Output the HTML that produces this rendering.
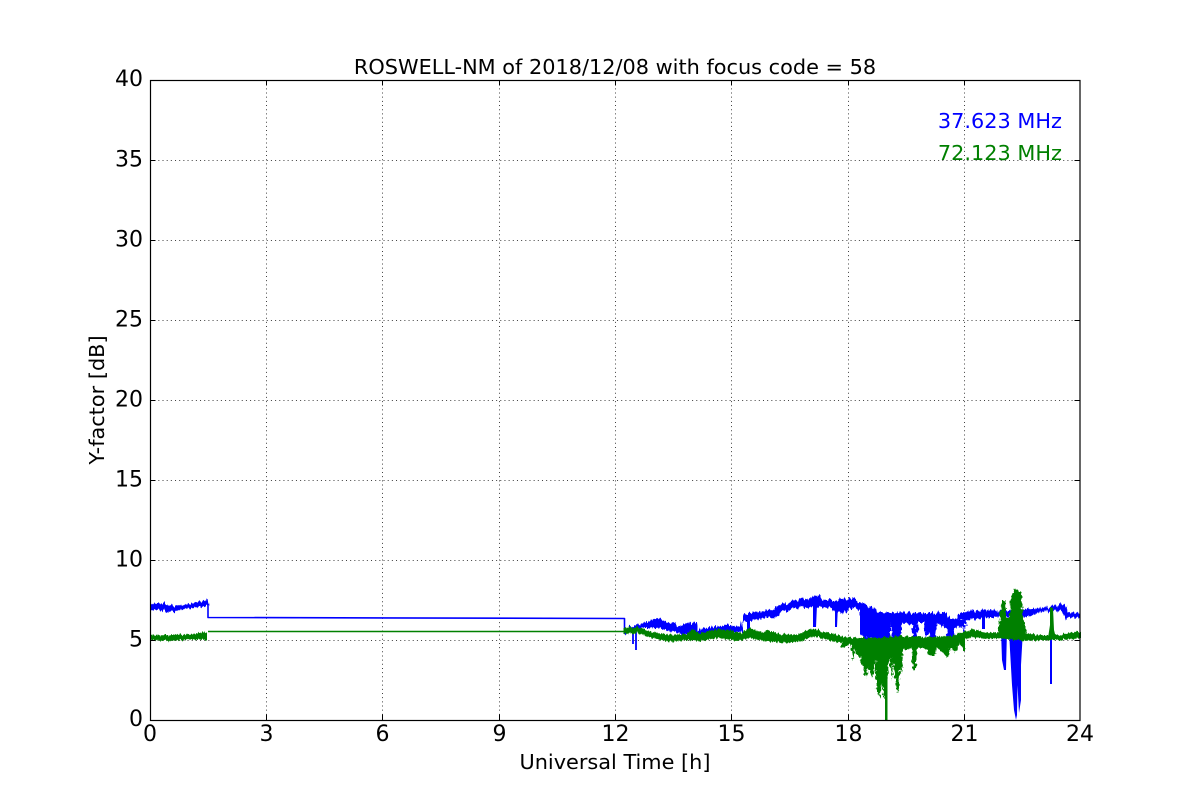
<!DOCTYPE html>
<html>
<head>
<meta charset="utf-8">
<style>
html,body{margin:0;padding:0;background:#fff;width:1200px;height:800px;overflow:hidden}
svg{display:block}
text{font-family:"DejaVu Sans",sans-serif;fill:#000}
.t{font-size:22px}
.l{font-size:20.83px}
</style>
</head>
<body>
<svg width="1200" height="800" viewBox="0 0 1200 800" xmlns="http://www.w3.org/2000/svg">
<defs>
<filter id="n1" filterUnits="userSpaceOnUse" x="0" y="0" width="1200" height="800" color-interpolation-filters="sRGB">
<feTurbulence type="fractalNoise" baseFrequency="0.55 0.006" numOctaves="2" seed="4" result="t"/>
<feDisplacementMap in="SourceGraphic" in2="t" scale="7" xChannelSelector="A" yChannelSelector="R"/>
</filter>
<filter id="n2" filterUnits="userSpaceOnUse" x="0" y="0" width="1200" height="800" color-interpolation-filters="sRGB">
<feTurbulence type="fractalNoise" baseFrequency="0.6 0.006" numOctaves="2" seed="11" result="t"/>
<feDisplacementMap in="SourceGraphic" in2="t" scale="5" xChannelSelector="A" yChannelSelector="G"/>
</filter>
<filter id="n3" filterUnits="userSpaceOnUse" x="0" y="0" width="1200" height="800" color-interpolation-filters="sRGB">
<feTurbulence type="fractalNoise" baseFrequency="0.35 0.25" numOctaves="2" seed="7" result="t"/>
<feDisplacementMap in="SourceGraphic" in2="t" scale="6" xChannelSelector="R" yChannelSelector="G"/>
</filter>
</defs>
<rect width="1200" height="800" fill="#fff"/>
<!-- grid -->
<g stroke="#000" stroke-width="1" stroke-dasharray="1 3.17" stroke-opacity=".75" fill="none">
<path d="M266.5 80V720M382.5 80V720M499.5 80V720M615.5 80V720M731.5 80V720M848.5 80V720M964.5 80V720"/>
<path d="M150 160.5H1080M150 240.5H1080M150 320.5H1080M150 400.5H1080M150 480.5H1080M150 560.5H1080M150 640.5H1080"/>
</g>
<!-- blue thin -->
<g fill="none" stroke="#0000ff" stroke-linejoin="round">
<path stroke-width="1.6" d="M208 604V617.5L624.5 618.5V634"/>
<path stroke-width="1.8" d="M633 630V644M636 630V650"/>
</g>
<!-- blue noisy -->
<g fill="#0000ff" filter="url(#n1)">
<path d="M150 604L165 603 172 606 185 605 195 603 207 599 208 605 195 608 185 609 172 612 160 610 150 610Z"/>
<path d="M625 628L637 625 647 622 657 618 667 622 675 623 678 627 690 623 697 622 698 630 710 627 730 625 740 627 743 615 753 612 773 610 780 605 797 600 810 598 817 595 823 600 837 600 853 598 860 603 875 608 877 613 890 618 898 612 910 613 923 613 947 613 952 625 957 615 968 611 993 609 998 612 1027 609 1050 607 1060 604 1067 605 1068 613 1080 612 1080 617 1067 618 1060 610 1040 612 1027 617 1000 617 985 617 968 620 960 620 948 622 937 620 925 620 905 620 892 622 885 640 877 640 860 635 860 610 855 608 848 609 843 615 840 612 830 608 810 607 797 608 780 612 777 618 763 618 743 622 742 632 730 632 710 636 698 636 683 635 675 632 657 628 640 628 625 634Z"/>
</g>
<!-- blue detail -->
<g fill="#0000ff" filter="url(#n3)">
<path d="M860 618L863 640 867 640 868 625 873 640 875 625 877 642 883 646 890 643 891 622 893 642 900 640 902 622 912 625 913 643 917 643 918 622 923 622 926 638 929 632 931 644 935 642 937 622 947 630 948 640 952 642 955 628 964 627 964 640 966 620 860 610Z"/>
</g>
<g fill="#0000ff">
<path d="M813 605L813 627 816 627 817 605ZM835 605L835 627 837 627 838 605ZM747 615L747 631 750 631 750 615ZM982 612L982 629 985 629 985 612Z"/>
<path d="M1001 630L1002 660 1004 670 1006 670 1007 630ZM1009 630L1010 650 1012 685 1014 710 1016 720 1017 715 1017.5 685 1019 713 1021 700 1021 665 1023 630Z"/>
<path d="M1050 610H1052V684H1050Z"/>
</g>
<!-- green noisy -->
<g fill="#008000">
<path stroke="#008000" stroke-width="1.6" d="M208 631.5H625" />
</g>
<g fill="#008000" filter="url(#n2)">
<path d="M150 635L175 635 190 634 207 632 207 640 190 639 175 641 150 640Z"/>
<path d="M624 628L637 627 653 632 670 635 687 634 692 629 700 633 720 629 730 630 740 633 750 628 763 633 767 630 780 634 797 635 813 628 823 632 833 633 843 637 860 638 880 638 920 638 950 636 964 632 972 629 987 633 1000 632 1027 634 1043 635 1060 635 1077 631 1080 632 1080 638 1060 640 1043 640 1027 641 1000 638 987 639 970 637 960 642 940 645 900 645 870 645 849 644 837 642 813 636 803 641 788 643 763 641 750 638 737 641 720 638 700 641 687 640 670 642 653 638 637 633 624 634Z"/>
</g>
<g fill="#008000" filter="url(#n3)">
<path d="M840 642L843 649 847 645 851 645 853 662 855 650 860 658 863 668 866 678 868 667 870 673 873 678 875 660 877 690 880 698 882 683 883 695 885 700 888 670 890 657 892 682 893 662 897 692 898 692 900 670 902 673 903 650 912 648 913 670 916 670 917 648 923 648 932 657 935 657 937 647 948 658 950 648 955 652 960 643 964 650 965 640 900 636Z"/>
<path d="M998 638L1000 612 1002 600 1006 600 1006 617 1009 617 1011 598 1015 588 1017 590 1021 593 1023 615 1026 628 1027 638Z"/>
</g>
<g fill="#008000">
<path d="M885 660H887.5V720H885Z"/>
<path d="M1050 607L1053 608 1054 630 1056 638 1048 638 1050 625Z"/>
<path d="M963 638H965V651H963Z"/>
</g>
<!-- axes -->
<rect x="150.5" y="80.5" width="929.5" height="640" fill="none" stroke="#000" stroke-width="1.2"/>
<g stroke="#000" stroke-width="1" fill="none">
<path d="M266.5 720v-5.5M382.5 720v-5.5M499.5 720v-5.5M615.5 720v-5.5M731.5 720v-5.5M848.5 720v-5.5M964.5 720v-5.5"/>
<path d="M266.5 80v5.5M382.5 80v5.5M499.5 80v5.5M615.5 80v5.5M731.5 80v5.5M848.5 80v5.5M964.5 80v5.5"/>
<path d="M150 160.5h5.5M150 240.5h5.5M150 320.5h5.5M150 400.5h5.5M150 480.5h5.5M150 560.5h5.5M150 640.5h5.5"/>
<path d="M1080 160.5h-5.5M1080 240.5h-5.5M1080 320.5h-5.5M1080 400.5h-5.5M1080 480.5h-5.5M1080 560.5h-5.5M1080 640.5h-5.5"/>
</g>
<!-- y labels -->
<g class="t" text-anchor="end">
<text x="143" y="86">40</text>
<text x="143" y="166.5">35</text>
<text x="143" y="246.5">30</text>
<text x="143" y="326.5">25</text>
<text x="143" y="406.5">20</text>
<text x="143" y="486.5">15</text>
<text x="143" y="566.5">10</text>
<text x="143" y="646.5">5</text>
<text x="143" y="726">0</text>
</g>
<!-- x labels -->
<g class="t" text-anchor="middle">
<text x="150" y="741">0</text>
<text x="266.5" y="741">3</text>
<text x="382.5" y="741">6</text>
<text x="499.5" y="741">9</text>
<text x="615.5" y="741">12</text>
<text x="731.5" y="741">15</text>
<text x="848.5" y="741">18</text>
<text x="964.5" y="741">21</text>
<text x="1080" y="741">24</text>
</g>
<text class="l" x="615" y="74" text-anchor="middle">ROSWELL-NM of 2018/12/08 with focus code = 58</text>
<text class="l" x="615" y="769" text-anchor="middle">Universal Time [h]</text>
<text class="l" transform="translate(104 400) rotate(-90)" text-anchor="middle">Y-factor [dB]</text>
<text class="l" x="1062" y="128" text-anchor="end" style="fill:#0000ff">37.623 MHz</text>
<text class="l" x="1062" y="160" text-anchor="end" style="fill:#008000">72.123 MHz</text>
</svg>
</body>
</html>
